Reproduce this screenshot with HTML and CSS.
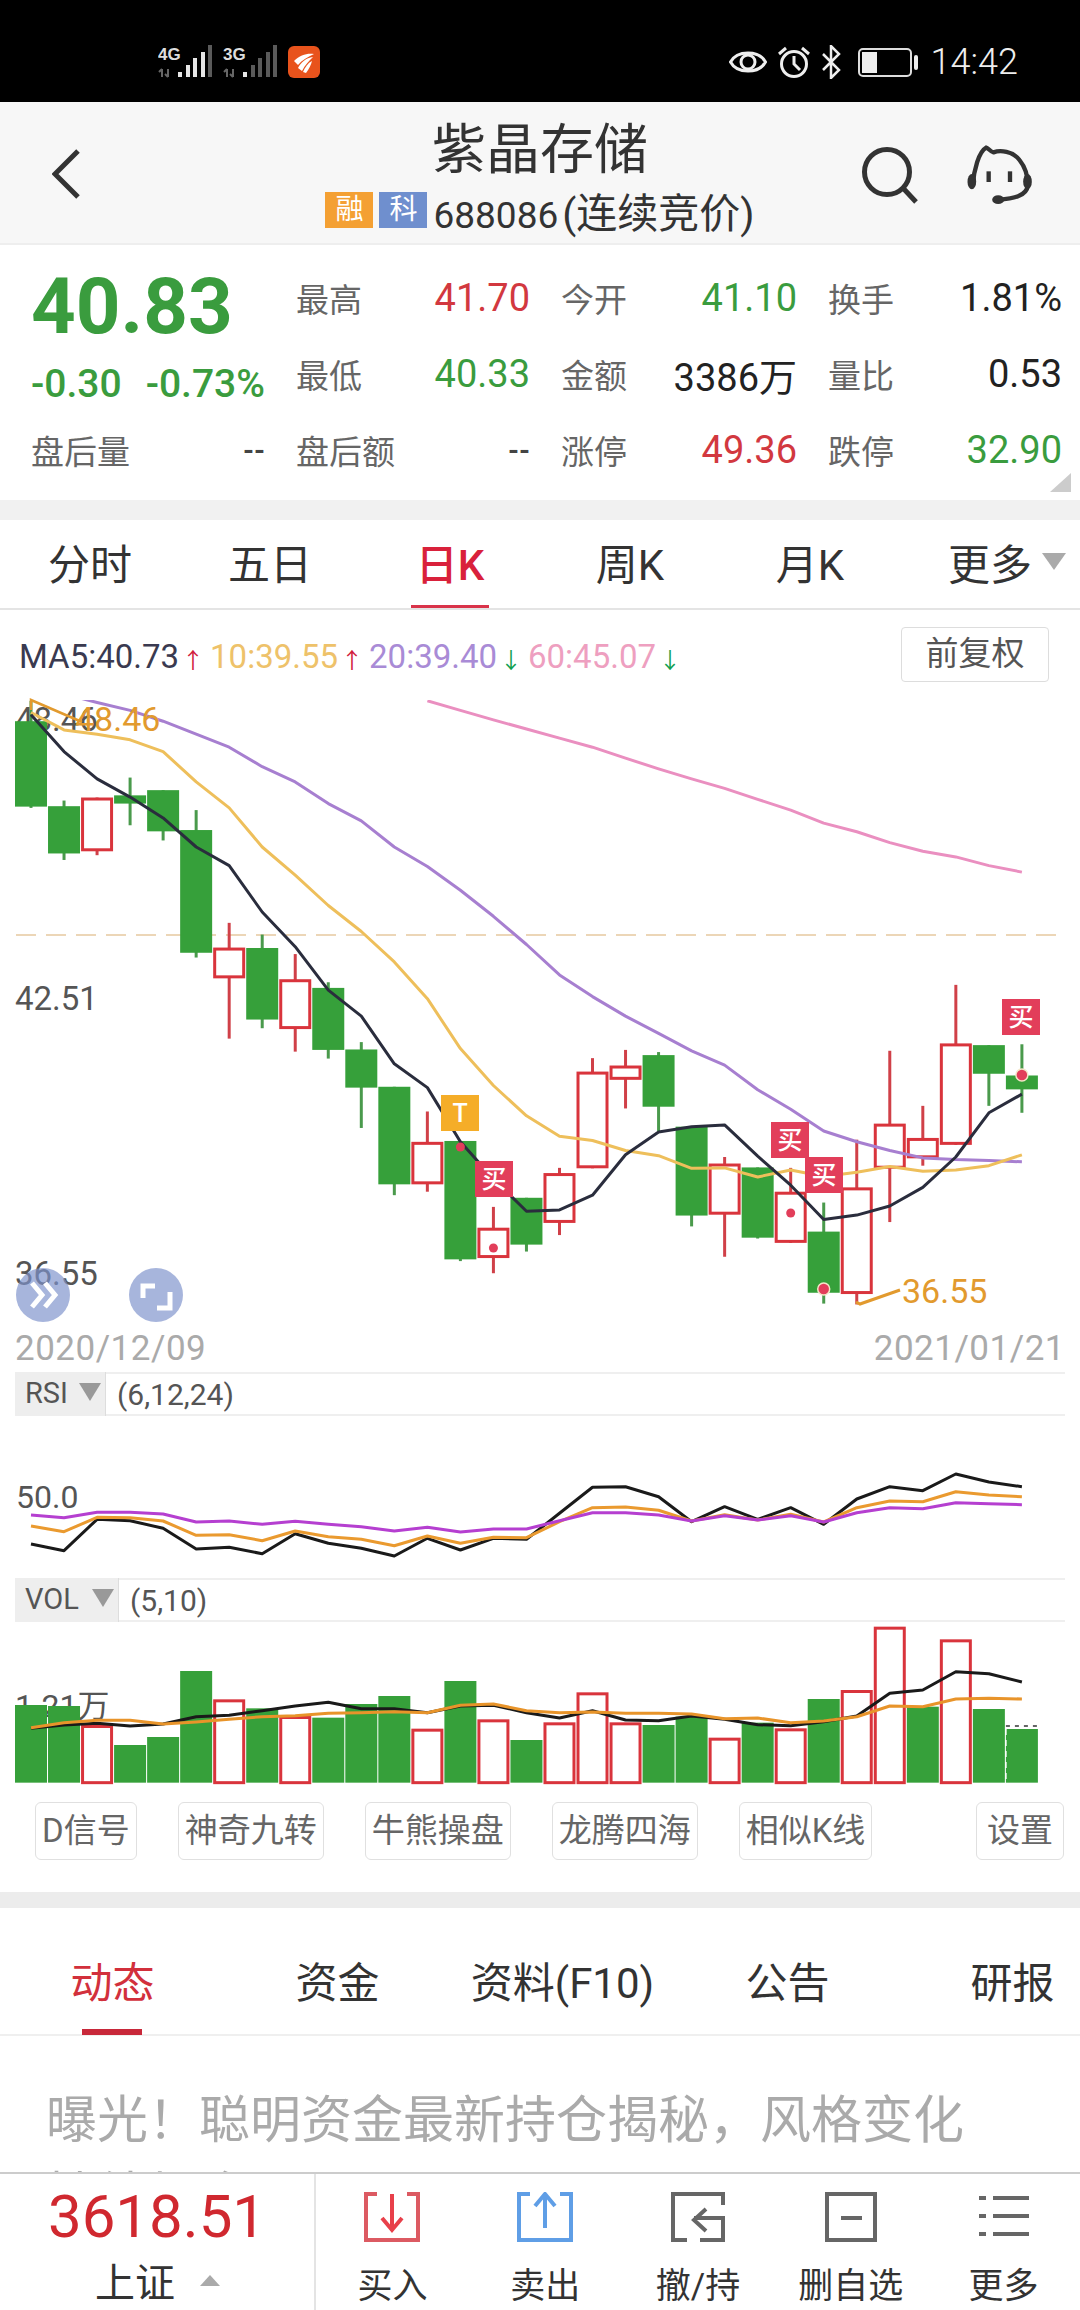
FILE: index.html
```html
<!DOCTYPE html>
<html lang="zh-CN">
<head>
    <meta charset="UTF-8">
    <meta name="viewport" content="width=device-width, initial-scale=1.0">
    <title>紫晶存储</title>
    <link rel="stylesheet" href="styles.css">
</head>
<body>
    <div class="status-bar">
        <div class="status-left">
            <svg class="signal" viewBox="0 0 56 34" width="56" height="34">
                <text class="net-label" x="0" y="15">4G</text>
                <path class="net-arrows" d="M4 32V24M1 27L4 24M10 24V32M7 29L10 32"/>
                <rect class="bar-on" x="20" y="27" width="4" height="5"/>
                <rect class="bar-on" x="28" y="20" width="4" height="12"/>
                <rect class="bar-on" x="35" y="13" width="4" height="19"/>
                <rect class="bar-on" x="43" y="7" width="4" height="25"/>
                <rect class="bar-off" x="50" y="0" width="4" height="32"/>
            </svg>
            <svg class="signal" viewBox="0 0 56 34" width="56" height="34">
                <text class="net-label" x="0" y="15">3G</text>
                <path class="net-arrows" d="M4 32V24M1 27L4 24M10 24V32M7 29L10 32"/>
                <rect class="bar-on" x="20" y="27" width="4" height="5"/>
                <rect class="bar-off" x="28" y="20" width="4" height="12"/>
                <rect class="bar-off" x="35" y="13" width="4" height="19"/>
                <rect class="bar-off" x="43" y="7" width="4" height="25"/>
                <rect class="bar-off" x="50" y="0" width="4" height="32"/>
            </svg>
            <svg class="app-icon" viewBox="0 0 32 32" width="32" height="32">
                <rect width="32" height="32" rx="6" fill="#e8531c"/>
                <path fill="#fff" d="M6 15C12 9 19 7 26 8C20 11 14 14 10 19Z"/>
                <path fill="#fff" d="M10 22C13 16 18 12 25 11C21 15 17 19 14 25Z"/>
                <path fill="#fff" d="M15 26C17 21 20 17 24 15C23 19 21 23 18 27Z"/>
            </svg>
        </div>
        <div class="status-right">
            <svg viewBox="0 0 38 28" width="38" height="28" class="status-icon">
                <path d="M1.5 14C8 2 30 2 36.500 14C30 26 8 26 1.500 14Z"/>
                <circle cx="19" cy="14" r="7"/>
            </svg>
            <svg viewBox="0 0 34 34" width="34" height="34" class="status-icon">
                <circle cx="17" cy="19" r="12.500"/>
                <path d="M17 11V19L23 25M2 9L9 3M32 9L25 3"/>
            </svg>
            <svg viewBox="0 0 20 34" width="20" height="34" class="status-icon thin">
                <path d="M2 9L18 25L10 33V1L18 9L2 25"/>
            </svg>
            <svg viewBox="0 0 60 29" width="60" height="29" class="battery">
                <rect class="battery-shell" x="1" y="1" width="52" height="27" rx="4"/>
                <rect class="battery-level" x="4" y="4" width="15" height="21"/>
                <rect class="battery-level" x="56" y="7" width="4" height="15" rx="2"/>
            </svg>
            <span class="clock">14:42</span>
        </div>
    </div>

    <header class="stock-header">
        <div class="header-left">
            <svg viewBox="0 0 28 50" width="28" height="50" class="line-icon">
                <path d="M26 2L3 25L26 48"/>
            </svg>
        </div>
        <div class="header-title">
            <h1>紫晶存储</h1>
            <div class="header-sub">
                <span class="tag tag-orange">融</span>
                <span class="tag tag-blue">科</span>
                <span>688086<span class="trade-state">(连续竞价)</span></span>
            </div>
        </div>
        <div class="header-right">
            <svg viewBox="0 0 60 60" width="60" height="60" class="line-icon">
                <circle cx="27" cy="27" r="22.500"/>
                <path d="M43 43L56 57"/>
            </svg>
            <svg viewBox="380 40 200 180" width="67" height="60" class="support-icon">
                <path class="support-line" d="M400 160C403 115 418 60 440 48C448 50 452 60 462 62C482 55 520 58 540 85C556 105 565 130 565 160C562 195 520 200 475 205"/>
                <ellipse cx="397" cy="150" rx="13" ry="23"/>
                <ellipse cx="564" cy="150" rx="13" ry="23"/>
                <ellipse cx="476" cy="204" rx="18" ry="13"/>
                <rect x="441" y="119" width="13" height="32"/>
                <rect x="505" y="119" width="13" height="32"/>
            </svg>
        </div>
    </header>

    <section class="quote">
        <div class="quote-grid">
            <div class="price green">40.83</div>
            <div class="cell"><span class="key">最高</span><span class="val red">41.70</span></div>
            <div class="cell"><span class="key">今开</span><span class="val green">41.10</span></div>
            <div class="cell"><span class="key">换手</span><span class="val">1.81%</span></div>

            <div class="change green"><span>-0.30</span><span>-0.73%</span></div>
            <div class="cell"><span class="key">最低</span><span class="val green">40.33</span></div>
            <div class="cell"><span class="key">金额</span><span class="val">3386万</span></div>
            <div class="cell"><span class="key">量比</span><span class="val">0.53</span></div>

            <div class="cell"><span class="key">盘后量</span><span class="val small">--</span></div>
            <div class="cell"><span class="key">盘后额</span><span class="val small">--</span></div>
            <div class="cell"><span class="key">涨停</span><span class="val red">49.36</span></div>
            <div class="cell"><span class="key">跌停</span><span class="val green">32.90</span></div>
        </div>
        <div class="corner-mark"></div>
    </section>

    <div class="band"></div>

    <nav class="period-tabs">
        <div class="period">分时</div>
        <div class="period">五日</div>
        <div class="period active">日K</div>
        <div class="period">周K</div>
        <div class="period">月K</div>
        <div class="period more">更多<i class="more-arrow"></i></div>
    </nav>

    <div class="ma-row">
        <div class="ma-list">
            <span class="ma5">MA5:40.73<b class="up">↑</b></span>
            <span class="ma10">10:39.55<b class="up">↑</b></span>
            <span class="ma20">20:39.40<b class="down">↓</b></span>
            <span class="ma60">60:45.07<b class="down">↓</b></span>
        </div>
        <div class="adjust-btn">前复权</div>
    </div>

    <svg id="price-chart" class="chart" width="1080" height="682" viewBox="0 0 1080 682"></svg>

    <div class="panel-head">
        <div class="panel-name rsi">RSI<i class="panel-arrow"></i></div>
        <span class="panel-args">(6,12,24)</span>
    </div>
    <svg id="rsi-chart" class="chart" width="1080" height="162" viewBox="0 0 1080 162"></svg>

    <div class="panel-head">
        <div class="panel-name vol">VOL<i class="panel-arrow"></i></div>
        <span class="panel-args">(5,10)</span>
    </div>
    <svg id="vol-chart" class="chart" width="1080" height="170" viewBox="0 0 1080 170"></svg>

    <div class="tool-row">
        <div class="tool-btn">D信号</div>
        <div class="tool-btn">神奇九转</div>
        <div class="tool-btn">牛熊操盘</div>
        <div class="tool-btn">龙腾四海</div>
        <div class="tool-btn">相似K线</div>
        <div class="tool-btn settings">设置</div>
    </div>

    <div class="band thin-band"></div>

    <nav class="info-tabs">
        <div class="info-tab active">动态</div>
        <div class="info-tab">资金</div>
        <div class="info-tab">资料(F10)</div>
        <div class="info-tab">公告</div>
        <div class="info-tab">研报</div>
    </nav>

    <main class="news">
        <p>曝光！聪明资金最新持仓揭秘，风格变化持续加仓</p>
    </main>

    <footer class="bottom-bar">
        <div class="index-box">
            <div class="index-value">3618.51</div>
            <div class="index-name">上证<i class="index-arrow"></i></div>
        </div>
        <div class="actions">
            <div class="action">
                <svg viewBox="0 0 56 50" width="56" height="50" class="action-icon">
                    <path stroke="#dc5a62" d="M13 2H2V48H54V2H43"/>
                    <path stroke="#e8404a" d="M28 2V38M18 26L28 38L38 26"/>
                </svg>
                <span>买入</span>
            </div>
            <div class="action">
                <svg viewBox="0 0 56 50" width="56" height="50" class="action-icon">
                    <path stroke="#5f9ee6" d="M13 2H2V48H54V2H43M28 36V2M18 14L28 2L38 14"/>
                </svg>
                <span>卖出</span>
            </div>
            <div class="action">
                <svg viewBox="0 0 54 50" width="54" height="50" class="action-icon">
                    <path stroke="#666" d="M52 13V2H2V48H16M29 48H52V26H23M35 17L23 28L35 39"/>
                </svg>
                <span>撤/持</span>
            </div>
            <div class="action">
                <svg viewBox="0 0 52 50" width="52" height="50" class="action-icon">
                    <path stroke="#666" d="M2 2H50V48H2ZM16 26H37"/>
                </svg>
                <span>删自选</span>
            </div>
            <div class="action">
                <svg viewBox="0 0 52 50" width="52" height="50" class="action-icon">
                    <path stroke="#666" d="M1 6H8M15 6H51M1 24H8M15 24H51M1 42H8M15 42H51"/>
                </svg>
                <span>更多</span>
            </div>
        </div>
    </footer>

    <script src="chart.js"></script>
</body>
</html>
```
FILE: styles.css
```css
* {
    margin: 0;
    padding: 0;
    box-sizing: border-box;
}

body {
    width: 1080px;
    height: 2310px;
    display: flex;
    flex-direction: column;
    overflow: hidden;
    background: #ffffff;
    color: #222222;
    font-family: Roboto, "Noto Sans CJK SC", sans-serif;
}

.red { color: #d2383f; }
.green { color: #3a9c3e; }

/* status bar */
.status-bar {
    height: 102px;
    flex: none;
    display: flex;
    align-items: center;
    justify-content: space-between;
    padding: 22px 62px 0 158px;
    background: #000000;
    color: #eeeeee;
}

.status-left,
.status-right {
    display: flex;
    align-items: center;
}

.status-left { gap: 9px; }
.status-right { gap: 10px; }

.net-label {
    font-family: "Liberation Sans Narrow", "Liberation Sans", sans-serif;
    font-size: 17px;
    font-weight: 700;
    fill: #dddddd;
}

.net-arrows {
    fill: none;
    stroke: #666666;
    stroke-width: 2;
}

.bar-on { fill: #e6e6e6; }
.bar-off { fill: #5a5a5a; }

.status-icon {
    fill: none;
    stroke: #eeeeee;
    stroke-width: 3;
}

.status-icon.thin { stroke-width: 2.5; }

.battery { margin-left: 7px; }
.battery-shell { fill: none; stroke: #dddddd; stroke-width: 2; }
.battery-level { fill: #eeeeee; }

.clock {
    margin-left: 3px;
    font-size: 36px;
    font-weight: 300;
    line-height: 40px;
}

/* header */
.stock-header {
    height: 143px;
    flex: none;
    display: grid;
    grid-template-columns: 1fr auto 1fr;
    background: #f7f7f7;
    border-bottom: 2px solid #eeeeee;
}

.header-left {
    display: flex;
    align-items: center;
    padding: 2px 0 0 52px;
}

.header-right {
    display: flex;
    align-items: center;
    justify-content: flex-end;
    gap: 46px;
    padding: 4px 47px 0 0;
}

.line-icon {
    fill: none;
    stroke: #333333;
    stroke-width: 5;
}

.support-icon { fill: #333333; }
.support-line { fill: none; stroke: #333333; stroke-width: 13; }

.header-title {
    display: flex;
    flex-direction: column;
    align-items: center;
    padding-top: 19px;
}

.header-title h1 {
    font-size: 54px;
    font-weight: 400;
    line-height: 60px;
    color: #333333;
}

.header-sub {
    display: flex;
    align-items: center;
    gap: 6px;
    margin-top: 7px;
    height: 44px;
    font-size: 37px;
    color: #333333;
}

.trade-state {
    margin-left: 4px;
    font-size: 41px;
}

.tag {
    width: 48px;
    height: 36px;
    font-size: 28px;
    line-height: 36px;
    text-align: center;
    color: #ffffff;
}

.tag-orange { background: #f4a033; }
.tag-blue { background: #6f8fce; }

/* quote grid */
.quote {
    position: relative;
    height: 255px;
    flex: none;
    padding: 15px 18px 0 31px;
}

.quote-grid {
    display: grid;
    grid-template-columns: 234px 234px 236px 234px;
    grid-auto-rows: 76px;
    column-gap: 31px;
}

.cell {
    display: flex;
    align-items: center;
    justify-content: space-between;
}

.key {
    font-size: 33px;
    color: #666666;
}

.val {
    font-size: 38px;
    color: #222222;
}

.val.red { color: #d2383f; }
.val.green { color: #3a9c3e; }
.val.small { font-size: 28px; font-weight: 700; color: #444444; }

.price {
    padding-top: 2px;
    font-size: 78px;
    font-weight: 700;
    line-height: 90px;
}

.change {
    display: flex;
    justify-content: space-between;
    padding-top: 25px;
    font-size: 39px;
    font-weight: 500;
    line-height: 46px;
}

.corner-mark {
    position: absolute;
    right: 9px;
    bottom: 8px;
    width: 0;
    height: 0;
    border-left: 21px solid transparent;
    border-bottom: 19px solid #cccccc;
}

.band {
    height: 20px;
    flex: none;
    background: #f1f1f1;
}

.thin-band {
    height: 16px;
    background: #ececec;
}

/* period tabs */
.period-tabs {
    height: 90px;
    flex: none;
    display: flex;
    border-bottom: 2px solid #e4e4e4;
}

.period {
    position: relative;
    flex: 1;
    padding-top: 17px;
    font-size: 42px;
    line-height: 58px;
    text-align: center;
    color: #333333;
}

.period.active {
    color: #d9213b;
    font-weight: 500;
}

.period.active::after {
    content: '';
    position: absolute;
    left: 51px;
    bottom: 0;
    width: 78px;
    height: 3px;
    background: #d9334a;
}

.more-arrow {
    position: absolute;
    top: 33px;
    right: 14px;
    width: 0;
    height: 0;
    border-left: 12px solid transparent;
    border-right: 12px solid transparent;
    border-top: 17px solid #aaaaaa;
}

/* MA legend */
.ma-row {
    height: 80px;
    flex: none;
    display: flex;
    align-items: center;
    justify-content: space-between;
    padding: 0 31px 8px 19px;
}

.ma-list {
    display: flex;
    gap: 15px;
    padding-top: 26px;
    font-size: 33px;
    line-height: 40px;
}

.ma-list b {
    display: inline-block;
    width: 13px;
    margin-left: 3px;
    font-weight: 400;
    font-size: 22px;
    text-align: center;
}

.ma5 { color: #3a3a50; }
.ma10 { color: #eec26a; }
.ma20 { color: #a98bd6; }
.ma60 { color: #ee9fc0; }
.up { color: #d0203a; }
.down { color: #10a050; }

.adjust-btn {
    width: 148px;
    height: 55px;
    margin-top: 16px;
    font-size: 33px;
    line-height: 52px;
    text-align: center;
    color: #555555;
    border: 1px solid #dddddd;
    border-radius: 4px;
}

/* chart panels, see chart.js */
.chart {
    display: block;
    flex: none;
}

.axis-label {
    font-size: 33px;
    fill: #555555;
}

.axis-label.orange {
    font-size: 34px;
    fill: #e29a2e;
}

.axis-label.date {
    font-size: 35px;
    letter-spacing: 0.5px;
    fill: #aaaaaa;
}

.axis-label.small {
    font-size: 32px;
}

.badge-text {
    font-size: 25px;
    font-weight: 500;
    fill: #ffffff;
    text-anchor: middle;
}

.panel-head {
    height: 44px;
    flex: none;
    display: flex;
    align-items: center;
    margin: 0 15px;
    border-top: 2px solid #efefef;
    border-bottom: 2px solid #efefef;
    font-size: 29px;
    color: #555555;
}

.panel-name {
    position: relative;
    height: 44px;
    flex: none;
    padding-left: 10px;
    line-height: 42px;
    background: #eeeeee;
    border-right: 1px solid #dddddd;
}

.panel-name.rsi { width: 91px; }
.panel-name.vol { width: 104px; }

.panel-arrow {
    position: absolute;
    top: 11px;
    right: 4px;
    width: 0;
    height: 0;
    border-left: 11px solid transparent;
    border-right: 11px solid transparent;
    border-top: 18px solid #999999;
}

.panel-args {
    margin-left: 11px;
    font-size: 30px;
}

.tool-row {
    height: 100px;
    flex: none;
    display: flex;
    gap: 41px;
    padding: 10px 16px 32px 35px;
}

.tool-btn {
    padding: 0 6px;
    font-size: 33px;
    line-height: 56px;
    color: #666666;
    border: 1px solid #e0e0e0;
    border-radius: 6px;
}

.tool-btn.settings {
    margin-left: auto;
    padding: 0 10px;
}

/* info tabs */
.info-tabs {
    height: 128px;
    flex: none;
    display: grid;
    grid-template-columns: repeat(5, 225px);
    padding-top: 46px;
    border-bottom: 2px solid #efefef;
}

.info-tab {
    position: relative;
    font-size: 42px;
    line-height: 60px;
    text-align: center;
    color: #333333;
}

.info-tab.active { color: #d2303c; }

.info-tab.active::after {
    content: '';
    position: absolute;
    left: 82px;
    top: 75px;
    width: 60px;
    height: 6px;
    background: #c8283a;
}

.news {
    flex: 1;
    overflow: hidden;
    padding: 47px 100px 0 46px;
}

.news p {
    font-size: 51px;
    line-height: 76px;
    color: #aaaaaa;
}

/* bottom bar */
.bottom-bar {
    height: 138px;
    flex: none;
    display: flex;
    background: #ffffff;
    border-top: 2px solid #cccccc;
}

.index-box {
    width: 316px;
    flex: none;
    padding-top: 10px;
    text-align: center;
    border-right: 2px solid #e4e4e4;
}

.index-value {
    font-size: 60px;
    line-height: 66px;
    color: #d0282f;
}

.index-name {
    position: relative;
    margin: 6px 0 0 -44px;
    font-size: 40px;
    line-height: 56px;
    color: #333333;
}

.index-arrow {
    position: absolute;
    top: 19px;
    right: 94px;
    width: 0;
    height: 0;
    border-left: 10px solid transparent;
    border-right: 10px solid transparent;
    border-bottom: 11px solid #aaaaaa;
}

.actions {
    flex: 1;
    display: flex;
}

.action {
    flex: 1;
    display: flex;
    flex-direction: column;
    align-items: center;
    padding-top: 18px;
    font-size: 35px;
    line-height: 44px;
    color: #333333;
}

.action-icon {
    flex: none;
    margin-bottom: 23px;
    fill: none;
    stroke-width: 4;
}
```
FILE: chart.js
```js
const NS = 'http://www.w3.org/2000/svg';

const GREEN = '#36a03a';
const RED = '#d9343c';
const BADGE_RED = '#e23e5a';

// candle x from its index, all panels share it
const kx = i => 31 + 33.03 * i;

// raw values are read off the screen, each panel has its own y scale
const priceY = v => v / 2.306 - 10;
const rsiY = v => v / 3 - 66;
const volY = v => v / 3 - 272;

// [body top, body bottom, wick top, wick bottom, colour]
const candles = [
    [95, 292, 48, 295, 'g'], [291, 400, 278, 415, 'g'], [271, 395, 271, 404, 'r'],
    [266, 285, 225, 335, 'g'], [254, 349, 254, 370, 'g'], [346, 629, 300, 640, 'g'],
    [617, 688, 560, 827, 'r'], [618, 783, 587, 803, 'g'], [690, 805, 632, 857, 'r'],
    [710, 853, 697, 873, 'g'], [852, 940, 835, 1033, 'g'], [938, 1163, 938, 1188, 'g'],
    [1065, 1163, 995, 1180, 'r'], [1063, 1336, 1063, 1340, 'g'], [1263, 1333, 1215, 1368, 'r'],
    [1194, 1302, 1194, 1318, 'g'], [1137, 1252, 1125, 1280, 'r'], [903, 1126, 872, 1126, 'r'],
    [889, 922, 853, 988, 'r'], [865, 984, 858, 1040, 'g'], [1030, 1235, 1030, 1260, 'g'],
    [1115, 1233, 1100, 1330, 'r'], [1124, 1286, 1124, 1288, 'g'], [1180, 1298, 1125, 1298, 'r'],
    [1272, 1413, 1205, 1438, 'g'], [1170, 1416, 1060, 1440, 'r'], [1023, 1127, 855, 1250, 'r'],
    [1056, 1103, 982, 1120, 'r'], [838, 1072, 703, 1072, 'r'], [842, 908, 842, 982, 'g'],
    [912, 944, 840, 998, 'g']
];

const ma5 = [80, 165, 228, 270, 318, 385, 428, 535, 615, 715, 775, 885, 940, 1065, 1150, 1225,
    1222, 1188, 1095, 1042, 1030, 1026, 1098, 1165, 1244, 1234, 1213, 1170, 1100, 998, 955];
const ma10 = [75, 115, 125, 138, 165, 235, 295, 385, 450, 520, 580, 650, 735, 850, 935, 1005,
    1052, 1062, 1085, 1097, 1126, 1125, 1146, 1130, 1145, 1135, 1122, 1133, 1130, 1120, 1095];
const ma20 = [32, 52, 70, 95, 125, 155, 200, 235, 285, 325, 385, 430, 485, 545, 610,
    680, 730, 775, 815, 855, 888, 945, 990, 1040, 1065, 1085, 1102, 1106, 1108, 1111];
const ma60 = [48, 70, 92, 113, 134, 155, 180, 205, 228, 250, 275, 300, 330, 350, 375, 395, 408, 428, 443];

const rsi6 = [582, 602, 508, 512, 535, 597, 592, 611, 551, 580, 595, 618, 565, 600, 565, 568,
    490, 412, 410, 440, 515, 470, 508, 473, 523, 447, 410, 422, 372, 396, 410];
const rsi12 = [528, 545, 502, 503, 513, 556, 554, 572, 543, 560, 568, 587, 558, 580, 562, 563,
    515, 473, 471, 481, 513, 494, 510, 493, 516, 473, 453, 455, 425, 435, 440];
const rsi24 = [495, 503, 487, 487, 492, 516, 513, 523, 514, 523, 530, 543, 532, 546, 537, 537,
    512, 488, 488, 495, 513, 497, 510, 497, 516, 488, 473, 476, 458, 461, 464];

// [bar top, colour]
const volumes = [
    [1065, 'g'], [1068, 'g'], [1125, 'r'], [1185, 'g'], [1161, 'g'], [963, 'g'], [1048, 'r'], [1075, 'g'],
    [1098, 'r'], [1103, 'g'], [1062, 'g'], [1038, 'g'], [1136, 'r'], [993, 'g'], [1108, 'r'], [1170, 'g'],
    [1117, 'r'], [1027, 'r'], [1117, 'r'], [1125, 'g'], [1100, 'g'], [1163, 'r'], [1118, 'g'], [1135, 'r'],
    [1047, 'g'], [1020, 'r'], [830, 'r'], [1070, 'g'], [868, 'r'], [1077, 'g'], [1137, 'g']
];
const vol5 = [1135, 1125, 1120, 1128, 1122, 1100, 1096, 1082, 1068, 1057, 1076, 1076, 1088, 1068, 1066, 1088,
    1104, 1082, 1110, 1112, 1098, 1108, 1124, 1127, 1115, 1098, 1030, 1020, 965, 971, 996];
const vol10 = [1133, 1118, 1111, 1111, 1122, 1116, 1108, 1100, 1097, 1090, 1088, 1085, 1088, 1066, 1062, 1082,
    1088, 1086, 1090, 1090, 1092, 1106, 1104, 1118, 1113, 1100, 1068, 1070, 1047, 1045, 1047];

function add(parent, tag, attrs, text) {
    const node = document.createElementNS(NS, tag);
    Object.keys(attrs).forEach(key => node.setAttribute(key, attrs[key]));
    if (text) node.textContent = text;
    parent.appendChild(node);
    return node;
}

function drawLine(parent, values, start, scale, color, width) {
    const points = values.map((v, i) => `${kx(start + i).toFixed(1)},${scale(v).toFixed(1)}`).join(' ');
    add(parent, 'polyline', {
        points: points,
        fill: 'none',
        stroke: color,
        'stroke-width': width,
        'stroke-linejoin': 'round'
    });
}

function drawCandle(parent, candle, i) {
    const [top, bottom, wickTop, wickBottom, type] = candle;
    const x = kx(i);
    const color = type === 'g' ? GREEN : RED;
    add(parent, 'line', {
        x1: x, x2: x,
        y1: priceY(wickTop), y2: priceY(wickBottom),
        stroke: type === 'g' ? '#4a9a4c' : '#d04048',
        'stroke-width': 3
    });
    if (type === 'g') {
        add(parent, 'rect', {
            x: x - 16, y: priceY(top),
            width: 32, height: priceY(bottom) - priceY(top),
            fill: color
        });
    } else {
        add(parent, 'rect', {
            x: x - 14.5, y: priceY(top) + 1.5,
            width: 29, height: priceY(bottom) - priceY(top) - 3,
            fill: '#ffffff', stroke: color, 'stroke-width': 3
        });
    }
}

function drawBadge(parent, x, y, color, label) {
    add(parent, 'rect', { x: x, y: y - 690, width: 38, height: 36, fill: color });
    add(parent, 'text', { class: 'badge-text', x: x + 19, y: y - 690 + 27 }, label);
}

function drawDot(parent, x, y, ring) {
    add(parent, 'circle', {
        cx: x, cy: y - 690, r: ring ? 6 : 4.5,
        fill: BADGE_RED,
        stroke: ring ? '#f4e6c8' : 'none',
        'stroke-width': 1.5
    });
}

function drawPriceChart() {
    const svg = document.getElementById('price-chart');

    add(svg, 'line', {
        x1: 16, x2: 1056, y1: 245, y2: 245,
        stroke: '#e6c9a0', 'stroke-width': 1.5, 'stroke-dasharray': '20 10'
    });

    add(svg, 'text', { class: 'axis-label', x: 15, y: 41 }, '48.46');
    add(svg, 'text', { class: 'axis-label', x: 15, y: 320 }, '42.51');
    add(svg, 'text', { class: 'axis-label', x: 15, y: 595 }, '36.55');

    candles.forEach((c, i) => drawCandle(svg, c, i));

    const clip = add(add(svg, 'defs', {}), 'clipPath', { id: 'ma-clip' });
    add(clip, 'rect', { x: 0, y: 10, width: 1080, height: 672 });
    const lines = add(svg, 'g', { 'clip-path': 'url(#ma-clip)' });
    drawLine(lines, ma60, 12, priceY, '#ea8fc0', 3);
    drawLine(lines, ma20, 1, priceY, '#a77fd0', 3);
    drawLine(lines, ma10, 0, priceY, '#eebf5b', 3);
    drawLine(lines, ma5, 0, priceY, '#2a2d3d', 3);

    // high and low markers
    add(svg, 'polyline', { points: '31,20 31,10 82,32', fill: 'none', stroke: '#e29a2e', 'stroke-width': 2.5 });
    add(svg, 'text', { class: 'axis-label orange', x: 75, y: 41 }, '48.46');
    add(svg, 'polyline', { points: '856,612 860,614 900,600', fill: 'none', stroke: '#e29a2e', 'stroke-width': 3 });
    add(svg, 'text', { class: 'axis-label orange', x: 902, y: 613 }, '36.55');

    // signals
    drawBadge(svg, 441, 1095, '#f5ad28', 'T');
    drawBadge(svg, 475, 1161, BADGE_RED, '买');
    drawBadge(svg, 771, 1122, BADGE_RED, '买');
    drawBadge(svg, 805, 1157, BADGE_RED, '买');
    drawBadge(svg, 1002, 999, BADGE_RED, '买');
    drawDot(svg, kx(13), 1147, false);
    drawDot(svg, kx(14), 1248, false);
    drawDot(svg, kx(23), 1213, false);
    drawDot(svg, kx(24), 1289, true);
    drawDot(svg, kx(30), 1075, true);

    // round overlay buttons
    add(svg, 'circle', { cx: 43, cy: 605, r: 27, fill: 'rgba(125, 146, 204, 0.68)' });
    add(svg, 'path', { d: 'M32 593L42 605L32 617M45 593L55 605L45 617', fill: 'none', stroke: '#ffffff', 'stroke-width': 5 });
    add(svg, 'circle', { cx: 156, cy: 605, r: 27, fill: 'rgba(125, 146, 204, 0.68)' });
    add(svg, 'path', { d: 'M143 608V596H155M170 602V618H157', fill: 'none', stroke: '#ffffff', 'stroke-width': 5 });

    add(svg, 'text', { class: 'axis-label date', x: 15, y: 670 }, '2020/12/09');
    add(svg, 'text', { class: 'axis-label date', x: 1065, y: 670, 'text-anchor': 'end' }, '2021/01/21');
}

function drawRsiChart() {
    const svg = document.getElementById('rsi-chart');
    add(svg, 'text', { class: 'axis-label small', x: 16, y: 92 }, '50.0');
    drawLine(svg, rsi6, 0, rsiY, '#1a1a1a', 3);
    drawLine(svg, rsi12, 0, rsiY, '#ea9a2f', 3);
    drawLine(svg, rsi24, 0, rsiY, '#b53fd0', 3);
}

function drawVolChart() {
    const svg = document.getElementById('vol-chart');
    const base = volY(1298);
    add(svg, 'text', { class: 'axis-label small', x: 15, y: 95 }, '1.21万');

    volumes.forEach(([top, type], i) => {
        const x = kx(i);
        if (type === 'g') {
            add(svg, 'rect', { x: x - 16, y: volY(top), width: 32, height: base - volY(top), fill: GREEN });
        } else {
            add(svg, 'rect', {
                x: x - 14.5, y: volY(top) + 1.5,
                width: 29, height: base - volY(top) - 1.5,
                fill: '#ffffff', stroke: RED, 'stroke-width': 3
            });
        }
    });

    // today's bar is still open
    const last = kx(30);
    add(svg, 'path', {
        d: `M${last - 16} ${volY(1128)}H${last + 16}`,
        stroke: '#666666', 'stroke-width': 2, 'stroke-dasharray': '4 5'
    });
    add(svg, 'path', {
        d: `M${last - 16} ${volY(1137)}V${base}`,
        stroke: '#ffffff', 'stroke-width': 1.5, 'stroke-dasharray': '6 5'
    });

    drawLine(svg, vol5, 0, volY, '#1a1a1a', 3);
    drawLine(svg, vol10, 0, volY, '#e8942a', 3);
}

drawPriceChart();
drawRsiChart();
drawVolChart();
```
